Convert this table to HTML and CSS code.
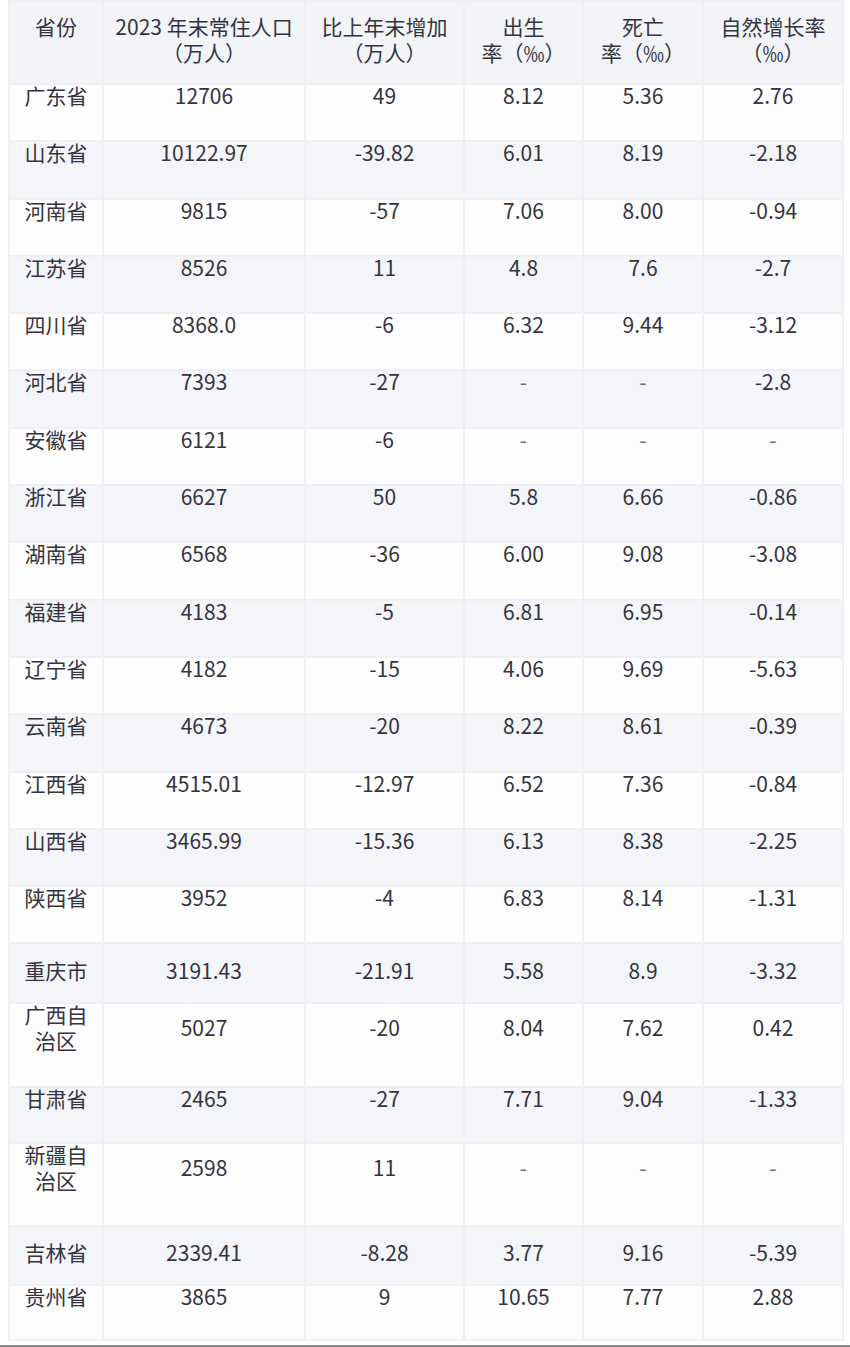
FILE: index.html
```html
<!DOCTYPE html>
<html lang="zh-CN">
<head>
<meta charset="utf-8">
<title>2023年各省常住人口</title>
<link rel="stylesheet" href="styles.css">
</head>
<body>
<div class="wrap">
<table class="data">
<colgroup>
<col class="c1"><col class="c2"><col class="c3"><col class="c4"><col class="c5"><col class="c6">
</colgroup>
<thead>
<tr><th><span class="v">省份</span></th><th><span class="v">2023 年末常住人口<br>（万人）</span></th><th><span class="v">比上年末增加<br>（万人）</span></th><th><span class="v">出生<br>率（‰）</span></th><th><span class="v">死亡<br>率（‰）</span></th><th><span class="v">自然增长率<br>（‰）</span></th></tr>
</thead>
<tbody>
<tr><td><span class="v">广东省</span></td><td><span class="v">12706</span></td><td><span class="v">49</span></td><td><span class="v">8.12</span></td><td><span class="v">5.36</span></td><td><span class="v">2.76</span></td></tr>
<tr><td><span class="v">山东省</span></td><td><span class="v">10122.97</span></td><td><span class="v">-39.82</span></td><td><span class="v">6.01</span></td><td><span class="v">8.19</span></td><td><span class="v">-2.18</span></td></tr>
<tr><td><span class="v">河南省</span></td><td><span class="v">9815</span></td><td><span class="v">-57</span></td><td><span class="v">7.06</span></td><td><span class="v">8.00</span></td><td><span class="v">-0.94</span></td></tr>
<tr><td><span class="v">江苏省</span></td><td><span class="v">8526</span></td><td><span class="v">11</span></td><td><span class="v">4.8</span></td><td><span class="v">7.6</span></td><td><span class="v">-2.7</span></td></tr>
<tr><td><span class="v">四川省</span></td><td><span class="v">8368.0</span></td><td><span class="v">-6</span></td><td><span class="v">6.32</span></td><td><span class="v">9.44</span></td><td><span class="v">-3.12</span></td></tr>
<tr><td><span class="v">河北省</span></td><td><span class="v">7393</span></td><td><span class="v">-27</span></td><td class="na"><span class="v">-</span></td><td class="na"><span class="v">-</span></td><td><span class="v">-2.8</span></td></tr>
<tr><td><span class="v">安徽省</span></td><td><span class="v">6121</span></td><td><span class="v">-6</span></td><td class="na"><span class="v">-</span></td><td class="na"><span class="v">-</span></td><td class="na"><span class="v">-</span></td></tr>
<tr><td><span class="v">浙江省</span></td><td><span class="v">6627</span></td><td><span class="v">50</span></td><td><span class="v">5.8</span></td><td><span class="v">6.66</span></td><td><span class="v">-0.86</span></td></tr>
<tr><td><span class="v">湖南省</span></td><td><span class="v">6568</span></td><td><span class="v">-36</span></td><td><span class="v">6.00</span></td><td><span class="v">9.08</span></td><td><span class="v">-3.08</span></td></tr>
<tr><td><span class="v">福建省</span></td><td><span class="v">4183</span></td><td><span class="v">-5</span></td><td><span class="v">6.81</span></td><td><span class="v">6.95</span></td><td><span class="v">-0.14</span></td></tr>
<tr><td><span class="v">辽宁省</span></td><td><span class="v">4182</span></td><td><span class="v">-15</span></td><td><span class="v">4.06</span></td><td><span class="v">9.69</span></td><td><span class="v">-5.63</span></td></tr>
<tr><td><span class="v">云南省</span></td><td><span class="v">4673</span></td><td><span class="v">-20</span></td><td><span class="v">8.22</span></td><td><span class="v">8.61</span></td><td><span class="v">-0.39</span></td></tr>
<tr><td><span class="v">江西省</span></td><td><span class="v">4515.01</span></td><td><span class="v">-12.97</span></td><td><span class="v">6.52</span></td><td><span class="v">7.36</span></td><td><span class="v">-0.84</span></td></tr>
<tr><td><span class="v">山西省</span></td><td><span class="v">3465.99</span></td><td><span class="v">-15.36</span></td><td><span class="v">6.13</span></td><td><span class="v">8.38</span></td><td><span class="v">-2.25</span></td></tr>
<tr><td><span class="v">陕西省</span></td><td><span class="v">3952</span></td><td><span class="v">-4</span></td><td><span class="v">6.83</span></td><td><span class="v">8.14</span></td><td><span class="v">-1.31</span></td></tr>
<tr class="mid"><td><span class="v">重庆市</span></td><td><span class="v">3191.43</span></td><td><span class="v">-21.91</span></td><td><span class="v">5.58</span></td><td><span class="v">8.9</span></td><td><span class="v">-3.32</span></td></tr>
<tr><td><span class="v">广西自<br>治区</span></td><td><span class="v">5027</span></td><td><span class="v">-20</span></td><td><span class="v">8.04</span></td><td><span class="v">7.62</span></td><td><span class="v">0.42</span></td></tr>
<tr class="short"><td><span class="v">甘肃省</span></td><td><span class="v">2465</span></td><td><span class="v">-27</span></td><td><span class="v">7.71</span></td><td><span class="v">9.04</span></td><td><span class="v">-1.33</span></td></tr>
<tr><td><span class="v">新疆自<br>治区</span></td><td><span class="v">2598</span></td><td><span class="v">11</span></td><td class="na"><span class="v">-</span></td><td class="na"><span class="v">-</span></td><td class="na"><span class="v">-</span></td></tr>
<tr class="mid mid2"><td><span class="v">吉林省</span></td><td><span class="v">2339.41</span></td><td><span class="v">-8.28</span></td><td><span class="v">3.77</span></td><td><span class="v">9.16</span></td><td><span class="v">-5.39</span></td></tr>
<tr class="last"><td><span class="v">贵州省</span></td><td><span class="v">3865</span></td><td><span class="v">9</span></td><td><span class="v">10.65</span></td><td><span class="v">7.77</span></td><td><span class="v">2.88</span></td></tr>
</tbody>
</table>
</div>
<div class="bar"></div>
</body>
</html>
```

FILE: styles.css
```css
html, body {
  margin: 0;
  padding: 0;
  background: #ffffff;
}

body {
  font-family: "Noto Sans CJK SC", "Noto Sans", sans-serif;
  color: #34343f;
}

.wrap {
  padding: 0 8px;
}

.data {
  width: 834px;
  table-layout: fixed;
  border-collapse: collapse;
  font-size: 21px;
  line-height: 26px;
}

.c1 { width: 94px; }
.c2 { width: 202px; }
.c3 { width: 159px; }
.c4 { width: 119px; }
.c5 { width: 120px; }
.c6 { width: 140px; }

.data th,
.data td {
  border: 2px solid #eef0f4;
  text-align: center;
  font-weight: 400;
  padding: 0 2px;
}

.v {
  display: block;
  margin-top: -3px;
  margin-bottom: 3px;
}

.data th {
  background: #f2f4f8;
  vertical-align: top;
  padding-top: 14px;
  padding-bottom: 15px;
  white-space: nowrap;
}

.data td {
  vertical-align: middle;
  padding-bottom: 29.3px;
}

.data tbody tr:nth-child(odd) td {
  background: #fdfdfe;
}

.data tbody tr:nth-child(even) td {
  background: #f4f5f9;
}

.data tr.mid td {
  padding-top: 16px;
  padding-bottom: 16px;
}

.data tr.mid2 td {
  padding-top: 15px;
  padding-bottom: 16px;
}

.data tr.short td {
  padding-bottom: 28px;
}

.data tr.last td {
  padding-bottom: 27px;
}

.data td.na {
  color: #6a6a74;
}

.bar {
  margin-top: 4px;
  height: 3px;
  background: #8a8a8a;
}
```
